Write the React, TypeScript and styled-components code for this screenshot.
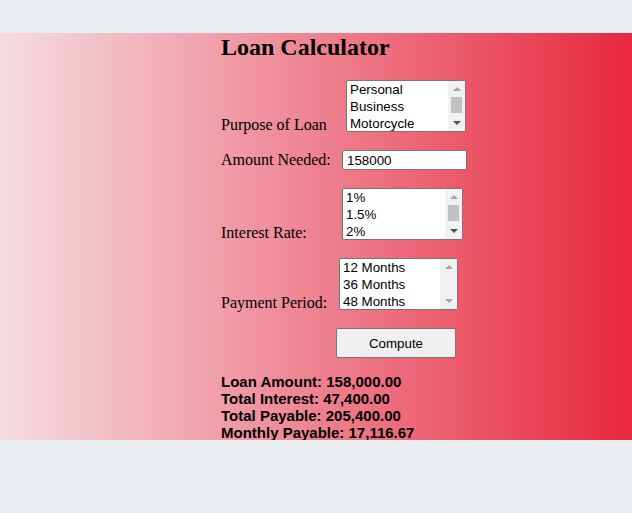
import React, { useState } from 'react';
import styled, { createGlobalStyle } from 'styled-components';

const GlobalStyle = createGlobalStyle`
  html, body {
    margin: 0;
    padding: 0;
    background: #ebeef1;
  }
`;

const purposes = ['Personal', 'Business', 'Motorcycle', 'Car', 'Housing'];
const rates = ['1%', '1.5%', '2%', '2.5%', '3%'];
const periods = ['12 Months', '36 Months', '48 Months'];

const fmt = (n: number) =>
  n.toLocaleString('en-US', { minimumFractionDigits: 2, maximumFractionDigits: 2 });

const ARROW_ON = '#505050';
const ARROW_OFF = '#a3a3a3';

interface ListSelectProps {
  options: string[];
  width: number;
  offset: number;
}

// a size=3 listbox with the classic always-visible scrollbar
const ListSelect: React.FC<ListSelectProps> = ({ options, width, offset }) => {
  const [selected, setSelected] = useState<string | null>(null);
  const scrollable = options.length > 3;

  return (
    <ListFrame width={width} offset={offset}>
      <OptionList>
        {options.slice(0, 3).map(o => (
          <OptionItem key={o} active={selected === o} onClick={() => setSelected(o)}>
            {o}
          </OptionItem>
        ))}
      </OptionList>
      <ScrollBar>
        <ScrollButton>
          <Arrow dir="up" color={ARROW_OFF} />
        </ScrollButton>
        <Track>{scrollable && <Thumb />}</Track>
        <ScrollButton>
          <Arrow dir="down" color={scrollable ? ARROW_ON : ARROW_OFF} />
        </ScrollButton>
      </ScrollBar>
    </ListFrame>
  );
};

const App: React.FC = () => {
  const [amount, setAmount] = useState('158000');
  const [result, setResult] = useState({
    loan: 158000,
    interest: 47400,
    total: 205400,
    monthly: 17116.67,
  });

  const handleCompute = () => {
    const loan = parseFloat(amount) || 0;
    const interest = loan * 0.3;
    const total = loan + interest;
    setResult({ loan, interest, total, monthly: total / 12 });
  };

  return (
    <>
      <GlobalStyle />
      <TopSpace />
      <Band>
        <Content>
          <Title>Loan Calculator</Title>

          <Row>
            <Label>Purpose of Loan</Label>
            <ListSelect options={purposes} width={120} offset={7} />
          </Row>

          <Row align="baseline">
            <Label>Amount Needed:</Label>
            <AmountInput
              type="text"
              value={amount}
              onChange={e => setAmount(e.target.value)}
            />
          </Row>

          <Row>
            <Label>Interest Rate:</Label>
            <ListSelect options={rates} width={121} offset={3} />
          </Row>

          <Row>
            <Label>Payment Period:</Label>
            <ListSelect options={periods} width={119} offset={0} />
          </Row>

          <ButtonRow>
            <ComputeButton onClick={handleCompute}>Compute</ComputeButton>
          </ButtonRow>

          <Results>
            <div>Loan Amount: {fmt(result.loan)}</div>
            <div>Total Interest: {fmt(result.interest)}</div>
            <div>Total Payable: {fmt(result.total)}</div>
            <div>Monthly Payable: {fmt(result.monthly)}</div>
          </Results>
        </Content>
      </Band>
    </>
  );
};

const TopSpace = styled.div`
  height: 33px;
`;

const Band = styled.div`
  height: 407px;
  overflow: hidden;
  background: linear-gradient(to right, #f5dde2, #e8283e);
`;

const Content = styled.div`
  width: 250px;
  margin-left: 221px;
  font-family: 'Liberation Serif', 'Times New Roman', serif;
  font-size: 16px;
  color: #000;
`;

const Title = styled.h2`
  margin: 0 0 19px;
  font-size: 24px;
  font-weight: bold;
  line-height: 28px;
`;

const Row = styled.div<{ align?: string }>`
  display: flex;
  align-items: ${props => props.align || 'flex-end'};
  margin-bottom: 18px;
`;

const Label = styled.span`
  width: 118px;
  flex-shrink: 0;
  margin-bottom: -2px;
`;

const ListFrame = styled.div<{ width: number; offset: number }>`
  display: flex;
  margin-left: ${props => props.offset}px;
  width: ${props => props.width}px;
  height: 52px;
  box-sizing: border-box;
  border: 1px solid #767676;
  border-radius: 2px;
  background: #fff;
  overflow: hidden;
`;

const OptionList = styled.div`
  flex: 1;
  min-width: 0;
  font-family: 'Liberation Sans', Arial, sans-serif;
  font-size: 13.33px;
  color: #000;
`;

const OptionItem = styled.div<{ active: boolean }>`
  padding: 0 3px;
  height: 17px;
  line-height: 17px;
  white-space: nowrap;
  cursor: default;
  background: ${props => (props.active ? '#cecece' : 'transparent')};
`;

const ScrollBar = styled.div`
  width: 17px;
  flex-shrink: 0;
  display: flex;
  flex-direction: column;
  background: #f1f1f1;
`;

const ScrollButton = styled.div`
  height: 16px;
  display: flex;
  align-items: center;
  justify-content: center;
`;

const Arrow = styled.span<{ dir: 'up' | 'down'; color: string }>`
  width: 0;
  height: 0;
  border-left: 4px solid transparent;
  border-right: 4px solid transparent;
  ${props =>
    props.dir === 'up'
      ? `border-bottom: 4px solid ${props.color};`
      : `border-top: 4px solid ${props.color};`}
`;

const Track = styled.div`
  flex: 1;
  display: flex;
  justify-content: center;
`;

const Thumb = styled.div`
  width: 11px;
  height: 16px;
  background: #c1c1c1;
`;

const AmountInput = styled.input`
  margin-left: 3px;
  width: 125px;
  height: 20px;
  box-sizing: border-box;
  border: 1px solid #767676;
  border-radius: 2px;
  padding: 1px 4px;
  font-family: 'Liberation Sans', Arial, sans-serif;
  font-size: 13.33px;
  color: #000;
  background: #fff;
`;

const ButtonRow = styled.div`
  padding-left: 115px;
`;

const ComputeButton = styled.button`
  width: 120px;
  height: 30px;
  border: 1px solid #767676;
  border-radius: 2px;
  background: #efefef;
  font-family: 'Liberation Sans', Arial, sans-serif;
  font-size: 13.33px;
  color: #000;
  cursor: pointer;

  &:hover {
    background: #e5e5e5;
  }
`;

const Results = styled.div`
  margin-top: 15px;
  font-family: 'Liberation Sans', Arial, sans-serif;
  font-size: 15px;
  font-weight: bold;
  line-height: 17px;
  white-space: nowrap;
`;

export default App;
